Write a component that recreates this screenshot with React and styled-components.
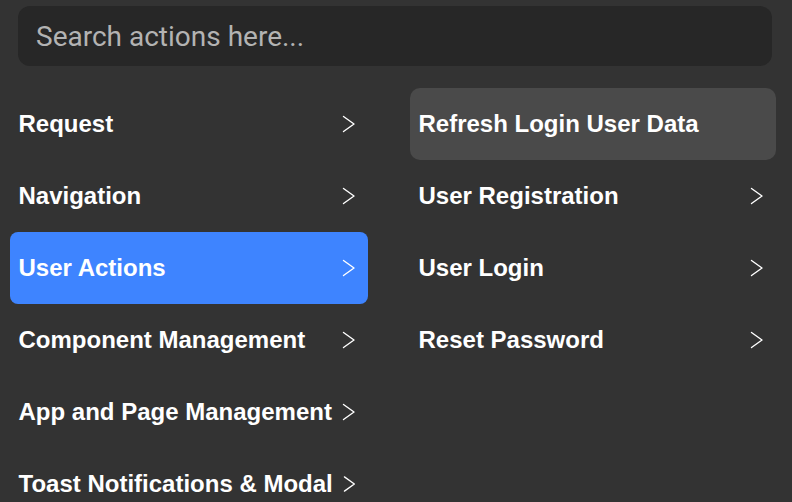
import React from "react";
import styled, { createGlobalStyle } from "styled-components";

const GlobalStyle = createGlobalStyle`
  html, body {
    margin: 0;
    background: #333333;
    overflow: hidden;
  }
`;

const Page = styled.div`
  width: 792px;
  height: 502px;
  background: #333333;
  padding: 6px 16px 0 10px;
  box-sizing: border-box;
  font-family: "Liberation Sans", Arial, sans-serif;
`;

const SearchBox = styled.input`
  display: block;
  width: 754px;
  height: 60px;
  margin-left: 8px;
  box-sizing: border-box;
  border: none;
  outline: none;
  border-radius: 12px;
  background: #272727;
  padding: 0 18px;
  font-family: Roboto, "Noto Sans", sans-serif;
  font-size: 28px;
  color: #eeeeee;

  &::placeholder {
    color: #b3b3b3;
  }
`;

const Columns = styled.div`
  display: grid;
  grid-template-columns: 358px 366px;
  column-gap: 42px;
  margin-top: 22px;
`;

const Column = styled.div`
  display: flex;
  flex-direction: column;
`;

const Item = styled.div`
  display: flex;
  align-items: center;
  justify-content: space-between;
  gap: 10px;
  height: 72px;
  padding: 0 12px 0 9px;
  border-radius: ${p => (p.$active ? "8px" : "10px")};
  background: ${p =>
    p.$active ? "#3e84ff" : p.$hover ? "#4a4a4a" : "transparent"};
  color: #ffffff;
  font-size: 24px;
  font-weight: 700;
  white-space: nowrap;
  cursor: pointer;
`;

const Label = styled.span`
  margin-left: -0.5px;
`;

const Chevron = () => (
  <svg width="14" height="18" viewBox="0 0 14 18" fill="none">
    <path
      d="M1.5 1.5 L12 9 L1.5 16.5"
      stroke="#ffffff"
      strokeWidth="1.4"
      strokeLinecap="round"
      strokeLinejoin="round"
    />
  </svg>
);

const categories = [
  "Request",
  "Navigation",
  "User Actions",
  "Component Management",
  "App and Page Management",
  "Toast Notifications & Modal",
];

const actions = [
  { name: "Refresh Login User Data", sub: false },
  { name: "User Registration", sub: true },
  { name: "User Login", sub: true },
  { name: "Reset Password", sub: true },
];

const App = () => {
  return (
    <Page>
      <GlobalStyle />
      <SearchBox placeholder="Search actions here..." />
      <Columns>
        <Column>
          {categories.map(c => (
            <Item key={c} $active={c === "User Actions"}>
              <Label>{c}</Label>
              <Chevron />
            </Item>
          ))}
        </Column>
        <Column>
          {actions.map((a, i) => (
            <Item key={a.name} $hover={i === 0}>
              <Label>{a.name}</Label>
              {a.sub && <Chevron />}
            </Item>
          ))}
        </Column>
      </Columns>
    </Page>
  );
};

export default App;
